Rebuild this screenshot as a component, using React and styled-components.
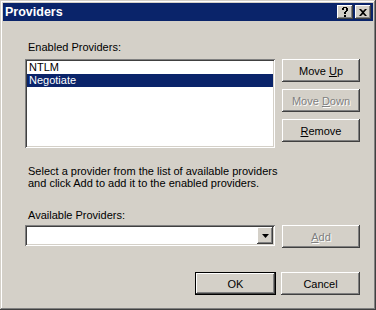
import React from "react";
import styled, { createGlobalStyle } from "styled-components";

const Global = createGlobalStyle`
  html, body { margin: 0; padding: 0; background: #d4d0c8; }
  body { font-family: "Liberation Sans", Arial, sans-serif; font-size: 11px; color: #000; }
  * { box-sizing: border-box; }
`;

const raised = `
  box-shadow: inset -1px -1px #404040, inset 1px 1px #ffffff,
    inset -2px -2px #808080, inset 2px 2px #d4d0c8;
`;

const sunken = `
  box-shadow: inset 1px 1px #808080, inset -1px -1px #ffffff,
    inset 2px 2px #404040, inset -2px -2px #d4d0c8;
`;

const Window = styled.div`
  width: 376px;
  height: 310px;
  padding: 3px;
  background: #d4d0c8;
  box-shadow: inset -1px -1px #404040, inset 1px 1px #d4d0c8,
    inset -2px -2px #808080, inset 2px 2px #ffffff;
  display: flex;
  flex-direction: column;
`;

const TitleBar = styled.div`
  height: 18px;
  background: #0a246a;
  display: flex;
  align-items: center;
  padding: 0 2px 0 2px;
`;

const Title = styled.div`
  flex: 1;
  color: #fff;
  font-family: "Liberation Sans", Arial, sans-serif;
  font-weight: bold;
  font-size: 12.5px;
  line-height: 18px;
`;

const TitleButtons = styled.div`
  display: flex;
  gap: 2px;
`;

const TitleButton = styled.div`
  width: 16px;
  height: 14px;
  background: #d4d0c8;
  ${raised}
  display: flex;
  align-items: center;
  justify-content: center;
`;

const Body = styled.div`
  padding: 20px 0 0 22px;
  display: flex;
  flex-direction: column;
`;

const Label = styled.div`
  margin-left: 3px;
  line-height: 13px;
  height: 13px;
  margin-top: ${(p) => p.$mt || 0}px;
`;

const Row = styled.div`
  display: flex;
  gap: 7px;
  margin-top: ${(p) => p.$mt || 0}px;
`;

const ListBox = styled.div`
  width: 250px;
  height: 89px;
  background: #fff;
  ${sunken}
  padding: 2px;
`;

const Item = styled.div`
  height: 13px;
  line-height: 13px;
  padding-left: 2px;
  background: ${(p) => (p.$selected ? "#0a246a" : "transparent")};
  color: ${(p) => (p.$selected ? "#fff" : "#000")};
`;

const ButtonCol = styled.div`
  display: flex;
  flex-direction: column;
  gap: 7px;
`;

const Button = styled.div`
  width: ${(p) => p.$w || 78}px;
  height: 23px;
  background: #d4d0c8;
  ${raised}
  ${(p) =>
    p.$default
      ? `box-shadow: inset 0 0 0 1px #000, inset -2px -2px #404040, inset 2px 2px #ffffff,
    inset -3px -3px #808080;`
      : ""}
  display: flex;
  align-items: center;
  justify-content: center;
  color: ${(p) => (p.$disabled ? "#808080" : "#000")};
  text-shadow: ${(p) => (p.$disabled ? "1px 1px 0 #fff" : "none")};
`;

const Caption = styled.span`
  white-space: pre;
`;

const U = styled.span`
  text-decoration: underline;
`;

const Description = styled.div`
  margin: 17px 0 0 3px;
  line-height: 12px;
`;

const Combo = styled.div`
  width: 250px;
  height: 21px;
  background: #fff;
  ${sunken}
  padding: 2px;
  display: flex;
  justify-content: flex-end;
`;

const DropButton = styled.div`
  width: 16px;
  height: 17px;
  background: #d4d0c8;
  ${raised}
  display: flex;
  align-items: center;
  justify-content: center;
`;

const Footer = styled.div`
  display: flex;
  justify-content: flex-end;
  gap: 5px;
  margin-top: 24px;
  padding-right: 13px;
`;

export default function App() {
  return (
    <>
      <Global />
      <Window>
        <TitleBar>
          <Title>Providers</Title>
          <TitleButtons>
            <TitleButton>
              <svg width="8" height="10" viewBox="0 0 8 10">
                <path d="M2 0h4v1H2zM1 1h2v2H1zM5 1h2v3H5zM4 4h2v1H4zM3 5h2v2H3zM3 8h2v2H3z" fill="#000" />
              </svg>
            </TitleButton>
            <TitleButton>
              <svg width="8" height="7" viewBox="0 0 8 7">
                <path d="M0 0h2l2 2 2-2h2L5 3.5 8 7H6L4 5 2 7H0l3-3.5z" fill="#000" />
              </svg>
            </TitleButton>
          </TitleButtons>
        </TitleBar>
        <Body>
          <Label>Enabled Providers:</Label>
          <Row $mt={5}>
            <ListBox>
              <Item>NTLM</Item>
              <Item $selected>Negotiate</Item>
            </ListBox>
            <ButtonCol>
              <Button><Caption>Move <U>U</U>p</Caption></Button>
              <Button $disabled><Caption>Move <U>D</U>own</Caption></Button>
              <Button><Caption><U>R</U>emove</Caption></Button>
            </ButtonCol>
          </Row>
          <Description>
            Select a provider from the list of available providers
            <br />
            and click Add to add it to the enabled providers.
          </Description>
          <Label $mt={20}>Available Providers:</Label>
          <Row $mt={3}>
            <Combo>
              <DropButton>
                <svg width="7" height="4" viewBox="0 0 7 4">
                  <path d="M0 0h7L3.5 4z" fill="#000" />
                </svg>
              </DropButton>
            </Combo>
            <Button $disabled><Caption><U>A</U>dd</Caption></Button>
          </Row>
        </Body>
        <Footer>
          <Button $default $w={81}>OK</Button>
          <Button $w={79}>Cancel</Button>
        </Footer>
      </Window>
    </>
  );
}
